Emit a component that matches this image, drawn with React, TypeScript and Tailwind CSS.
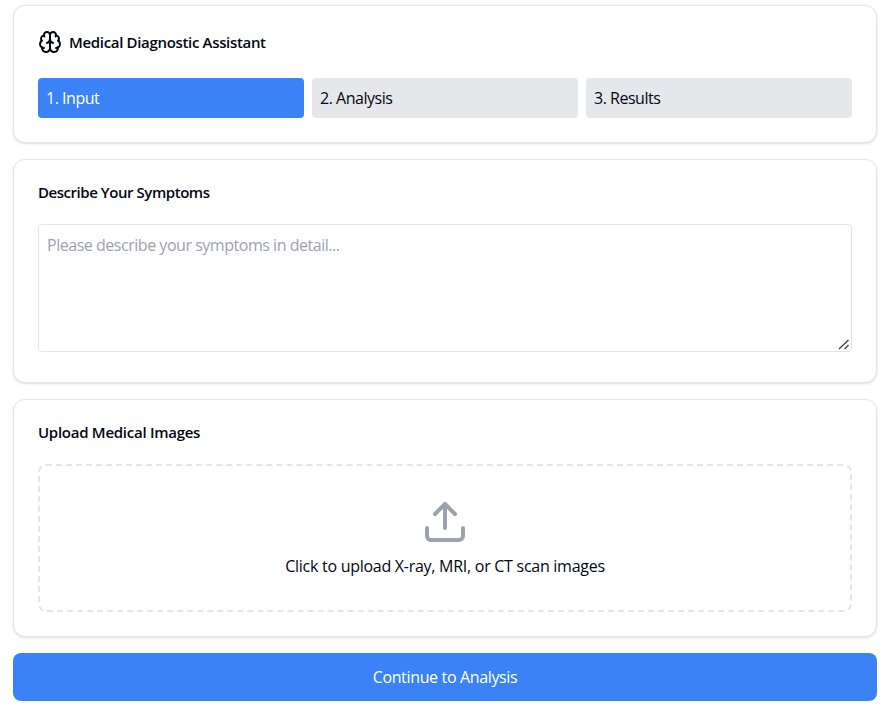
import React from "react";
import { Upload } from "lucide-react";

const card = "rounded-xl border border-[#e5e5e5] bg-white p-6 shadow-sm";

function BrainIcon() {
  return (
    <svg className="size-6 shrink-0" viewBox="0 0 24 24" fill="none" stroke="currentColor" strokeWidth="2" strokeLinecap="round" strokeLinejoin="round">
      <path d="M12 5a3 3 0 1 0-5.997.125 4 4 0 0 0-2.526 5.77 4 4 0 0 0 .556 6.588A4 4 0 1 0 12 18Z" />
      <path d="M12 5a3 3 0 1 1 5.997.125 4 4 0 0 1 2.526 5.77 4 4 0 0 1-.556 6.588A4 4 0 1 1 12 18Z" />
      <path d="M15 13a4.5 4.5 0 0 1-3-4 4.5 4.5 0 0 1-3 4" />
      <path d="M17.599 6.5a3 3 0 0 0 .399-1.375" />
      <path d="M6.003 5.125A3 3 0 0 0 6.401 6.5" />
      <path d="M3.477 10.896a4 4 0 0 1 .585-.396" />
      <path d="M19.938 10.5a4 4 0 0 1 .585.396" />
      <path d="M6 18a4 4 0 0 1-1.967-.516" />
      <path d="M19.967 17.484A4 4 0 0 1 18 18" />
    </svg>
  );
}

export default function App() {
  return (
    <div className="h-[708px] overflow-hidden bg-white pt-[5px] pr-2 pl-[13px] font-['Open_Sans',sans-serif] text-base text-[#030712]">
      <div className="flex flex-col gap-4">
        <section className={card}>
          <div className="mb-6 flex h-6 items-center gap-2">
            <BrainIcon />
            <h1 className="-ml-px text-[15px] leading-6 font-semibold tracking-[-0.33px]">Medical Diagnostic Assistant</h1>
          </div>
          <div className="grid grid-cols-3 gap-2 tracking-[-0.48px]">
            <div className="rounded-sm bg-[#3b82f6] p-2 text-white">1. Input</div>
            <div className="rounded-sm bg-[#e5e7eb] p-2">2. Analysis</div>
            <div className="rounded-sm bg-[#e5e7eb] p-2">3. Results</div>
          </div>
        </section>
        <section className={card}>
          <h2 className="mb-6 text-[15px] leading-4 font-semibold tracking-[-0.45px]">Describe Your Symptoms</h2>
          <div className="relative mb-1.5">
            <textarea className="block h-32 w-full resize-none rounded-sm border border-[#e5e5e5] p-2 tracking-[-0.47px] placeholder:text-[#9ca3af]" placeholder="Please describe your symptoms in detail..." />
            <svg className="pointer-events-none absolute right-[2px] bottom-[2px] h-[11px] w-[12px] text-[#444]" viewBox="0 0 12 11" fill="none" stroke="currentColor" strokeWidth="1.4">
              <path d="M1 10 10.5 1M6.5 10l4-4" />
            </svg>
          </div>
        </section>
        <section className={card}>
          <h2 className="mb-6 text-[15px] leading-4 font-semibold tracking-[-0.27px]">Upload Medical Images</h2>
          <div className="flex flex-col items-center rounded-lg border-2 border-dashed border-[#e5e5e5] p-8">
            <Upload className="mb-2 size-12 text-[#9ca3af]" />
            <p className="tracking-[-0.27px]">Click to upload X-ray, MRI, or CT scan images</p>
          </div>
        </section>
        <button className="h-12 rounded-lg bg-[#3b82f6] tracking-[-0.35px] text-white">Continue to Analysis</button>
      </div>
    </div>
  );
}
